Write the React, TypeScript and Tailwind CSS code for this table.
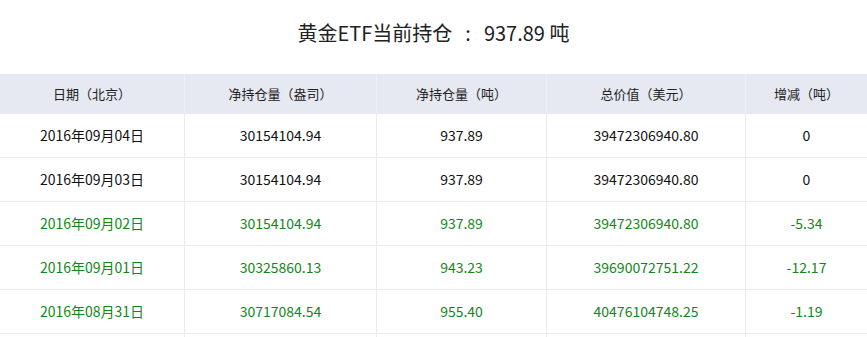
const rows = [
  { date: "2016年09月04日", oz: "30154104.94", ton: "937.89", usd: "39472306940.80", diff: "0", down: false },
  { date: "2016年09月03日", oz: "30154104.94", ton: "937.89", usd: "39472306940.80", diff: "0", down: false },
  { date: "2016年09月02日", oz: "30154104.94", ton: "937.89", usd: "39472306940.80", diff: "-5.34", down: true },
  { date: "2016年09月01日", oz: "30325860.13", ton: "943.23", usd: "39690072751.22", diff: "-12.17", down: true },
  { date: "2016年08月31日", oz: "30717084.54", ton: "955.40", usd: "40476104748.25", diff: "-1.19", down: true },
];

const cols = ["w-[185px]", "w-[192px]", "w-[170px]", "w-[199px]", "flex-1"];
const heads = ["日期（北京）", "净持仓量（盎司）", "净持仓量（吨）", "总价值（美元）", "增减（吨）"];

export default function App() {
  return (
    <div className="w-[867px] h-[337px] overflow-hidden bg-white font-['Microsoft_YaHei','Noto_Sans_CJK_SC',sans-serif]">
      <h1 className="h-[74px] pt-[18px] flex justify-center text-[20px] leading-[30px] text-[#222]">
        <span>黄金ETF当前持仓</span>
        <span className="ml-[13px] mr-[13px]">:</span>
        <span>937.89 吨</span>
      </h1>
      <div className="flex h-[40px] bg-[#e6e9f1] text-[13px] text-[#222]">
        {heads.map((h, i) => (
          <div
            key={h}
            className={`${cols[i]} flex items-center justify-center ${i < 4 ? "border-r border-[#eef0f5]" : ""}`}
          >
            {h}
          </div>
        ))}
      </div>
      {rows.map((r) => (
        <div
          key={r.date}
          className={`flex h-[44px] border-b border-[#ebebeb] text-[14px] ${r.down ? "text-[#13861a]" : "text-[#111]"}`}
        >
          {[r.date, r.oz, r.ton, r.usd, r.diff].map((v, i) => (
            <div
              key={i}
              className={`${cols[i]} flex items-center justify-center ${i < 4 ? "border-r border-[#ebebeb]" : ""}`}
            >
              {v}
            </div>
          ))}
        </div>
      ))}
      <div className="flex h-[44px]">
        {cols.map((c, i) => (
          <div key={i} className={`${c} ${i < 4 ? "border-r border-[#ebebeb]" : ""}`} />
        ))}
      </div>
    </div>
  );
}
